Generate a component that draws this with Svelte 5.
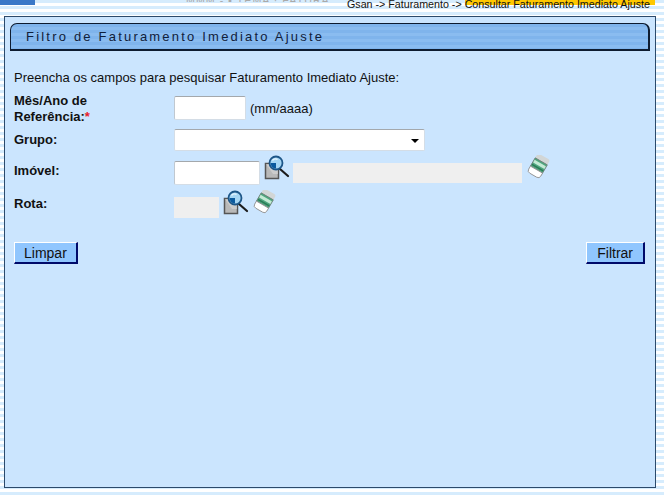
<script>
  const crumbs = 'Gsan -> Faturamento -> ';
  const current = 'Consultar Faturamento Imediato Ajuste';
</script>

{#snippet lupa()}
  <svg class="icone lupa" width="26" height="26" viewBox="0 0 26 26">
    <rect x="1.500" y="8.500" width="13" height="15" fill="#b9b9b9" stroke="#555" stroke-width="1.500" />
    <path d="M2 9h12v10H9z" fill="#d8d8d8" opacity="0.6" />
    <path d="M16 14l8 7" stroke="#1c1c1c" stroke-width="2.200" stroke-linecap="round" />
    <circle cx="12" cy="8" r="6.500" fill="#a6d6f4" stroke="#1d5688" stroke-width="1.800" />
    <path d="M6.500 8a5.500 5.500 0 0 0 5.500 5.500V8z" fill="#0b5a9e" />
    <path d="M8.500 5.500a4 4 0 0 1 5-1" stroke="#e8f6ff" stroke-width="1.300" fill="none" />
  </svg>
{/snippet}

{#snippet borracha()}
  <svg class="icone borracha" width="25" height="25" viewBox="0 0 25 25">
    <g transform="rotate(30 12 12)">
      <rect x="5" y="0" width="14" height="7" rx="2" fill="#d2d6d6" />
      <rect x="5" y="5.500" width="14" height="9.500" fill="#4ea67e" stroke="#6f7d76" stroke-width="0.800" />
      <rect x="5.500" y="7.500" width="13" height="3" fill="#c4ead4" />
      <rect x="5.500" y="12" width="13" height="1.500" fill="#2a7a56" />
      <path d="M5 15h14v3.500a3 3 0 0 1-3 3h-8a3 3 0 0 1-3-3z" fill="#fff" stroke="#8a8a8a" stroke-width="0.800" />
    </g>
  </svg>
{/snippet}

<div class="pagina">
  <header class="topo">
    <div class="marca"></div>
    <div class="cortado">MMM - ▪ TEMA · FATURA</div>
    <div class="trilha">{crumbs}<span class="atual">{current}</span></div>
  </header>

  <main class="painel">
    <div class="titulo"><span>Filtro de Faturamento Imediato Ajuste</span></div>

    <p class="intro">Preencha os campos para pesquisar Faturamento Imediato Ajuste:</p>

    <form class="filtro" onsubmit={(e) => e.preventDefault()}>
      <div class="linha mes">
        <label for="mes">Mês/Ano de Referência:<span class="obrig">*</span></label>
        <input id="mes" class="campo w72" type="text" />
        <span class="dica">(mm/aaaa)</span>
      </div>

      <div class="linha grupo">
        <label for="grupo">Grupo:</label>
        <div class="select" id="grupo"><i></i></div>
      </div>

      <div class="linha imovel">
        <label for="imovel">Imóvel:</label>
        <input id="imovel" class="campo w86" type="text" />
        {@render lupa()}
        <input class="leitura w229" type="text" readonly />
        {@render borracha()}
      </div>

      <div class="linha rota">
        <label for="rota">Rota:</label>
        <input id="rota" class="leitura w45" type="text" readonly />
        {@render lupa()}
        {@render borracha()}
      </div>

      <div class="acoes">
        <button type="button">Limpar</button>
        <button type="button">Filtrar</button>
      </div>
    </form>
  </main>
</div>

<style>
  :global(body) {
    margin: 0;
    background: #fff;
  }

  .pagina {
    width: 664px;
    height: 496px;
    overflow: hidden;
    font-family: "Liberation Sans", Arial, sans-serif;
    color: #111;
    background: repeating-linear-gradient(to bottom, #d6ecfd 0, #d6ecfd 3px, #fff 3px, #fff 6px);
  }

  .topo {
    display: flex;
    height: 16px;
    overflow: hidden;
    font-size: 10.7px;
  }

  .marca {
    flex: none;
    width: 35px;
    height: 5px;
    background: #3a78c8;
  }

  .cortado {
    width: 312px;
    height: 2px;
    overflow: hidden;
    padding-left: 151px;
    box-sizing: border-box;
    line-height: 0;
    color: #aaa;
    letter-spacing: 1px;
    white-space: nowrap;
  }

  .trilha {
    margin-top: -2px;
    line-height: 12px;
    white-space: nowrap;
  }

  .atual {
    display: inline-block;
    padding-right: 5px;
    background: linear-gradient(to bottom, #ffc800 0, #ffc800 7px, transparent 7px);
  }

  .painel {
    box-sizing: border-box;
    width: 652px;
    height: 472px;
    margin-left: 4px;
    padding: 6px 5px 0 5px;
    background: #cbe5fe;
    border: 1px solid #2c4a6b;
  }

  .titulo {
    box-sizing: border-box;
    height: 28px;
    padding-left: 15px;
    line-height: 25px;
    font-size: 13px;
    letter-spacing: 2.2px;
    color: #10203a;
    background: repeating-linear-gradient(to bottom, #7fb4ec 0, #7fb4ec 3px, #8abcf0 3px, #8abcf0 6px);
    border: 1px solid #0e1c30;
    border-width: 1px 2px 2px 1px;
    border-radius: 7px 7px 0 0;
  }

  .intro {
    margin: 20px 0 0 4px;
    font-size: 13px;
    line-height: 14px;
  }

  .filtro {
    margin: 11px 0 0 4px;
  }

  .linha {
    display: flex;
    align-items: flex-start;
  }

  label {
    flex: none;
    box-sizing: border-box;
    width: 160px;
    padding-right: 55px;
    font-size: 13px;
    font-weight: bold;
    line-height: 16px;
  }

  .obrig {
    color: #e8202a;
  }

  .campo,
  .leitura {
    display: block;
    box-sizing: border-box;
    margin: 0;
    padding: 0;
    flex: none;
  }

  .campo {
    background: #fff;
    border: 1px solid #d4dde6;
    border-top-color: #a4a8ac;
    border-left-color: #c0c8d0;
    border-radius: 2px;
  }

  .leitura {
    background: #efefef;
    border: 0;
  }

  .w72 { width: 72px; height: 24px; }
  .w86 { width: 86px; height: 24px; }
  .w229 { width: 229px; height: 20px; margin: 8px 0 0 3px; }
  .w45 { width: 45px; height: 21px; margin-top: 7px; }

  .dica {
    margin: 5px 0 0 4px;
    font-size: 13px;
    line-height: 16px;
  }

  .mes { height: 33px; }
  .mes label { margin-top: -3px; }

  .grupo { height: 26px; }
  .grupo label { margin-top: 3px; }

  .select {
    position: relative;
    width: 251px;
    height: 22px;
    box-sizing: border-box;
    background: #fff;
    border: 1px solid #d4dde6;
    border-top-color: #a4a8ac;
    border-radius: 2px;
  }

  .select i {
    position: absolute;
    right: 5px;
    top: 9px;
    border: 4px solid transparent;
    border-top-color: #000;
    border-bottom: 0;
  }

  .imovel {
    height: 35px;
  }
  .imovel label { margin-top: 8px; }
  .imovel .campo { margin-top: 6px; }
  .imovel .lupa { margin-left: 4px; }
  .imovel .borracha { margin-left: 4px; }

  .rota {
    height: 52px;
  }
  .rota label { margin-top: 6px; }
  .rota .lupa { margin-left: 4px; }
  .rota .borracha { margin-left: 3px; }

  .icone {
    display: block;
    flex: none;
  }

  .acoes {
    display: flex;
    justify-content: space-between;
    padding-right: 5px;
  }

  button {
    box-sizing: border-box;
    height: 22px;
    padding: 0 9px;
    font: 14px "Liberation Sans", Arial, sans-serif;
    color: #111;
    background: #90c6fe;
    border: 2px solid;
    border-color: #fff #000a6a #000a6a #fff;
    border-width: 1px 2px 2px 1px;
  }

  button + button {
    padding: 0 10px;
  }
</style>
